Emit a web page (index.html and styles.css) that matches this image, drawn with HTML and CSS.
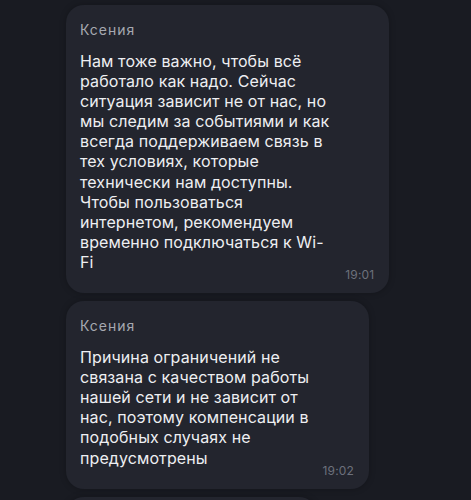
FILE: index.html
```html
<!DOCTYPE html>
<html lang="ru">
<head>
    <meta charset="UTF-8">
    <meta name="viewport" content="width=device-width, initial-scale=1.0">
    <title>Чат</title>
    <link rel="stylesheet" href="styles.css">
</head>
<body>
    <div class="chat">
        <div class="message">
            <div class="author">Ксения</div>
            <div class="text">Нам тоже важно, чтобы всё<br>работало как надо. Сейчас<br>ситуация зависит не от нас, но<br>мы следим за событиями и как<br>всегда поддерживаем связь в<br>тех условиях, которые<br>технически нам доступны.<br>Чтобы пользоваться<br>интернетом, рекомендуем<br>временно подключаться к Wi-<br>Fi</div>
            <div class="time">19:01</div>
        </div>
        <div class="message">
            <div class="author">Ксения</div>
            <div class="text">Причина ограничений не<br>связана с качеством работы<br>нашей сети и не зависит от<br>нас, поэтому компенсации в<br>подобных случаях не<br>предусмотрены</div>
            <div class="time">19:02</div>
        </div>
        <div class="message message-short"></div>
    </div>
</body>
</html>
```

FILE: styles.css
```css
body {
    font-family: Inter, "Noto Sans", sans-serif;
    background-color: #191b22;
    margin: 0;
    padding: 0;
    height: 500px;
    overflow: hidden;
}

.chat {
    display: flex;
    flex-direction: column;
    align-items: flex-start;
    gap: 8px;
    padding: 5px 0 0 66px;
}

.message {
    box-sizing: border-box;
    width: fit-content;
    padding: 16px 15px 10px 14px;
    background-color: #23252e;
    border-radius: 18px;
    box-shadow: 0 0 6px rgba(0, 0, 0, 0.25);
}

.author {
    font-size: 14px;
    line-height: 18px;
    letter-spacing: 1px;
    color: #a6a9b1;
}

.text {
    margin-top: 12px;
    padding-right: 45px;
    white-space: nowrap;
    font-size: 16px;
    line-height: 20.1px;
    letter-spacing: 0.1px;
    color: #eeeff2;
}

.time {
    margin-top: -5px;
    text-align: right;
    font-size: 12px;
    line-height: 16px;
    letter-spacing: 0.2px;
    color: #6d717c;
}

.message-short {
    width: 251px;
    height: 60px;
}
```
